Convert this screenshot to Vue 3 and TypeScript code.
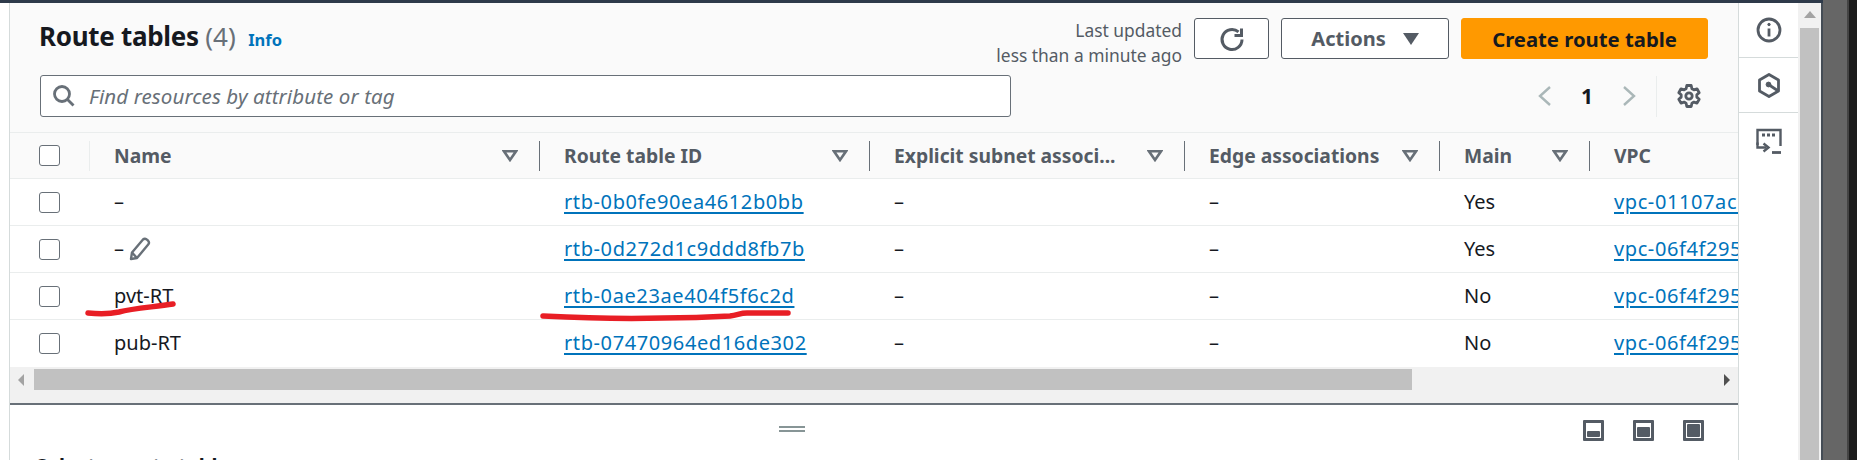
<script setup lang="ts">
interface Column {
  label: string
  width: number
  filter: boolean
}

interface Row {
  name: string
  edit?: boolean
  id: string
  main: string
  vpc: string
}

const columns: Column[] = [
  { label: 'Name', width: 450, filter: true },
  { label: 'Route table ID', width: 330, filter: true },
  { label: 'Explicit subnet associ...', width: 315, filter: true },
  { label: 'Edge associations', width: 255, filter: true },
  { label: 'Main', width: 150, filter: true },
  { label: 'VPC', width: 260, filter: false },
]

const rows: Row[] = [
  { name: '–', id: 'rtb-0b0fe90ea4612b0bb', main: 'Yes', vpc: 'vpc-01107ac…' },
  { name: '–', edit: true, id: 'rtb-0d272d1c9ddd8fb7b', main: 'Yes', vpc: 'vpc-06f4f295…' },
  { name: 'pvt-RT', id: 'rtb-0ae23ae404f5f6c2d', main: 'No', vpc: 'vpc-06f4f295…' },
  { name: 'pub-RT', id: 'rtb-07470964ed16de302', main: 'No', vpc: 'vpc-06f4f295…' },
]
</script>

<template>
  <div class="screen">
    <div class="topline"></div>
    <div class="body">
      <main class="content">
        <header class="head">
          <h1>Route tables <span class="count">(4)</span> <a class="info">Info</a></h1>
          <div class="actions">
            <p class="updated">Last updated<br />less than a minute ago</p>
            <button class="btn refresh" type="button" aria-label="Refresh">
              <svg width="26" height="26" viewBox="0 0 26 26" fill="none" stroke="#545b64" stroke-width="3">
                <path d="M23 13.500a10 10 0 1 1-3.500-7.600" />
                <path d="M22.500 2.500v7h-7" />
              </svg>
            </button>
            <button class="btn actions-btn" type="button">
              Actions
              <svg width="16" height="12" viewBox="0 0 16 12"><path d="M0 0h16L8 12z" fill="#545b64" /></svg>
            </button>
            <button class="btn primary" type="button">Create route table</button>
          </div>
        </header>

        <div class="toolbar">
          <label class="search">
            <svg width="22" height="22" viewBox="0 0 22 22" fill="none" stroke="#687078" stroke-width="2.800">
              <circle cx="9" cy="9" r="7.500" />
              <path d="M14.500 14.500l6 6" />
            </svg>
            <span>Find resources by attribute or tag</span>
          </label>
          <div class="pager">
            <svg width="13" height="20" viewBox="0 0 13 20" fill="none" stroke="#aab7b8" stroke-width="2.400"><path d="M12 1L2 10l10 9" /></svg>
            <b>1</b>
            <svg width="13" height="20" viewBox="0 0 13 20" fill="none" stroke="#aab7b8" stroke-width="2.400"><path d="M1 1l10 9-10 9" /></svg>
          </div>
          <div class="prefs">
            <svg width="24" height="24" viewBox="0 0 24 24" fill="none" stroke="#545b64" stroke-width="2.800" stroke-linejoin="round">
              <path d="M9.800 1.500h4.400l.7 3.200 2 1.100 3.100-1 2.200 3.800-2.400 2.200v2.300l2.400 2.200-2.200 3.800-3.100-1-2 1.100-.7 3.300H9.800l-.7-3.300-2-1.100-3.100 1-2.200-3.800 2.400-2.200v-2.300L1.800 8.600 4 4.800l3.100 1 2-1.100z" />
              <circle cx="12" cy="12" r="3.200" />
            </svg>
          </div>
        </div>

        <div class="table">
          <div class="row header">
            <div class="check-cell"><span class="checkbox"></span></div>
            <div v-for="col in columns" :key="col.label" class="th" :style="{ width: col.width + 'px' }">
              <span>{{ col.label }}</span>
              <svg v-if="col.filter" class="filter" width="16" height="12" viewBox="0 0 16 12" fill="none" stroke="#687078" stroke-width="2.600"><path d="M2 1.300h12L8 10z" /></svg>
            </div>
          </div>
          <div v-for="row in rows" :key="row.id" class="row">
            <div class="check-cell"><span class="checkbox"></span></div>
            <div class="td" :style="{ width: columns[0].width + 'px' }">
              {{ row.name }}
              <svg v-if="row.edit" class="pencil" width="22" height="24" viewBox="0 0 22 24" fill="none" stroke="#687078" stroke-width="2.400" stroke-linejoin="round">
                <path d="M2 22l1-6.500L14 2.500a2.800 2.800 0 0 1 4 .2l1 1a2.800 2.800 0 0 1 .2 3.800L8 21z" />
                <path d="M3 15.500L8 21" />
              </svg>
            </div>
            <div class="td" :style="{ width: columns[1].width + 'px' }"><a>{{ row.id }}</a></div>
            <div class="td" :style="{ width: columns[2].width + 'px' }">–</div>
            <div class="td" :style="{ width: columns[3].width + 'px' }">–</div>
            <div class="td" :style="{ width: columns[4].width + 'px' }">{{ row.main }}</div>
            <div class="td" :style="{ width: columns[5].width + 'px' }"><a>{{ row.vpc }}</a></div>
          </div>
          <svg class="scribble first" width="100" height="20" viewBox="0 0 100 20" fill="none" stroke="#e81e25" stroke-width="5.500" stroke-linecap="round">
            <path d="M3 15c10 1 22 1 31-1 15-4 36-5 54-8" />
          </svg>
          <svg class="scribble second" width="260" height="16" viewBox="0 0 260 16" fill="none" stroke="#e81e25" stroke-width="5.500" stroke-linecap="round">
            <path d="M3 7c40 2 80 3 120 2 25 0 50-1 67-2 8-1 10-3 17-3h41" />
          </svg>
        </div>

        <div class="hscroll">
          <i class="arrow left"></i>
          <div class="thumb"></div>
          <i class="arrow right"></i>
        </div>

        <section class="split">
          <div class="split-bar">
            <div class="handle"></div>
            <div class="split-icons">
              <span class="split-icon small"></span>
              <span class="split-icon medium"></span>
              <span class="split-icon large"></span>
            </div>
          </div>
          <h2>Select a route table</h2>
        </section>
      </main>

      <aside class="tools">
        <div class="tool">
          <svg width="26" height="26" viewBox="0 0 26 26" fill="none" stroke="#545b64" stroke-width="2.800">
            <circle cx="13" cy="13" r="11" />
            <path d="M13 11.500v8" />
            <circle cx="13" cy="7.500" r="1.200" fill="#545b64" stroke-width="1" />
          </svg>
        </div>
        <div class="tool">
          <svg width="22" height="25" viewBox="0 0 22 25" fill="none" stroke="#545b64" stroke-width="2.800" stroke-linejoin="round">
            <path d="M11 1.500l9.500 5.500v11L11 23.500 1.500 18V7z" />
            <circle cx="10.500" cy="11.500" r="2.400" fill="#545b64" stroke-width="1" />
            <path d="M10.500 11.500l9 6" />
          </svg>
        </div>
        <div class="tool">
          <svg width="26" height="26" viewBox="0 0 26 26" fill="none" stroke="#545b64" stroke-width="2.400">
            <path d="M1.500 17V2h23v16" />
            <path d="M1.500 14.500v5h9" />
            <path d="M7.500 15.500l5 4-5 4" />
            <path d="M16 24.500h9" stroke-width="2.800" />
            <path d="M6 7h3M11 7h3M16 7h3" stroke-width="3" />
          </svg>
        </div>
      </aside>

      <div class="vscroll">
        <i class="up"></i>
        <div class="vthumb"></div>
      </div>
      <div class="edge"></div>
    </div>
  </div>
</template>

<style scoped>
.screen {
  width: 1857px;
  height: 460px;
  overflow: hidden;
  background: #fff;
  font-family: "Noto Sans", "Liberation Sans", sans-serif;
  color: #16191f;
}

.topline {
  height: 3px;
  width: 1823px;
  background: #2e3a4a;
}

.body {
  display: flex;
  height: 457px;
}

.content {
  width: 1729px;
  margin-left: 9px;
  border-left: 1px solid #d5dbdb;
  overflow: hidden;
  flex: none;
  background: #fff;
  box-sizing: border-box;
}

.head {
  display: flex;
  justify-content: space-between;
  height: 72px;
  padding: 15px 30px 0 29px;
  box-sizing: border-box;
  background: #fafafa;
}

h1 {
  margin: 1px 0 0;
  font-size: 26px;
  font-weight: 700;
  line-height: 34px;
  letter-spacing: -0.3px;
}

.count {
  color: #687078;
  font-weight: 400;
  letter-spacing: 0;
}

.info {
  margin-left: 6px;
  color: #0073bb;
  font-size: 16.500px;
  font-weight: 700;
  letter-spacing: 0;
}

.actions {
  display: flex;
  gap: 12px;
}

.updated {
  margin: 0;
  font-size: 17.400px;
  line-height: 25px;
  color: #545b64;
  text-align: right;
}

.btn {
  height: 41px;
  border: 1px solid #545b64;
  border-radius: 3px;
  background: #fff;
  font: inherit;
  font-size: 20px;
  font-weight: 700;
  color: #545b64;
  padding: 0;
  display: flex;
  align-items: center;
  justify-content: center;
}

.refresh {
  width: 75px;
}

.actions-btn {
  width: 168px;
  gap: 17px;
}

.primary {
  width: 247px;
  font-size: 20.300px;
  background: #f90;
  border-color: #f90;
  color: #16191f;
}

.toolbar {
  display: flex;
  align-items: center;
  height: 57px;
  padding: 0 37px 15px 30px;
  box-sizing: border-box;
  background: #fafafa;
}

.search {
  width: 971px;
  height: 42px;
  box-sizing: border-box;
  border: 1px solid #687078;
  border-radius: 3px;
  background: #fff;
  display: flex;
  align-items: center;
  gap: 14px;
  padding-left: 12px;
  font-style: italic;
  font-size: 20.500px;
  letter-spacing: 0.1px;
  color: #687078;
}

.pager {
  margin-left: auto;
  display: flex;
  align-items: center;
  gap: 30px;
  font-size: 21px;
}

.prefs {
  height: 41px;
  margin-left: 20px;
  padding-left: 20px;
  border-left: 1px solid #eaeded;
  display: flex;
  align-items: center;
}

.table {
  position: relative;
  border-top: 1px solid #eaeded;
}

.row {
  display: flex;
  height: 47px;
  box-sizing: border-box;
  border-bottom: 1px solid #eaeded;
  align-items: center;
  font-size: 20px;
}

.row:last-of-type {
  border-bottom: 0;
}

.row.header {
  height: 46px;
  background: #fafafa;
  font-size: 19.300px;
}

.check-cell {
  width: 80px;
  height: 30px;
  flex: none;
  padding-left: 29px;
  box-sizing: border-box;
  display: flex;
  align-items: center;
}

.header .check-cell {
  border-right: 1px solid #eaeded;
}

.checkbox {
  width: 21px;
  height: 21px;
  box-sizing: border-box;
  border: 1.500px solid #687078;
  border-radius: 3px;
  background: #fff;
}

.th {
  height: 30px;
  flex: none;
  padding: 0 21px 0 24px;
  box-sizing: border-box;
  border-right: 1px solid #687078;
  display: flex;
  align-items: center;
  justify-content: space-between;
  font-weight: 700;
  color: #545b64;
  white-space: nowrap;
}

.th:last-child {
  border-right: 0;
}

.td {
  flex: none;
  padding: 0 0 2px 24px;
  box-sizing: border-box;
  white-space: nowrap;
  display: flex;
  align-items: center;
  gap: 5px;
}

.td a {
  color: #0073bb;
  letter-spacing: 0.6px;
  text-decoration: underline;
  text-decoration-thickness: 2px;
  text-underline-offset: 3px;
}

.pencil {
  flex: none;
  margin-top: 2px;
}

.scribble {
  position: absolute;
  pointer-events: none;
}

.scribble.first {
  left: 75px;
  top: 165px;
}

.scribble.second {
  left: 530px;
  top: 176px;
}

.hscroll {
  height: 36px;
  background: #f1f1f1;
  border-bottom: 2px solid #687078;
  position: relative;
}

.thumb {
  position: absolute;
  left: 24px;
  top: 2px;
  width: 1378px;
  height: 21px;
  background: #c1c1c1;
}

.arrow {
  position: absolute;
  top: 7px;
  width: 0;
  height: 0;
  border-top: 6px solid transparent;
  border-bottom: 6px solid transparent;
}

.arrow.left {
  left: 8px;
  border-right: 6px solid #a3a3a3;
}

.arrow.right {
  right: 8px;
  border-left: 6px solid #505050;
}

.split {
  padding: 0 34px 0 26px;
  position: relative;
}

.split-bar {
  height: 47px;
  position: relative;
  display: flex;
  justify-content: flex-end;
  align-items: flex-start;
  padding-top: 15px;
  box-sizing: border-box;
}

.handle {
  position: absolute;
  left: 743px;
  top: 21px;
  width: 26px;
  height: 2px;
  border-top: 2px solid #879596;
  border-bottom: 2px solid #879596;
}

.split-icons {
  display: flex;
  gap: 29px;
}

.split-icon {
  width: 21px;
  height: 21px;
  box-sizing: border-box;
  border: 3px solid #545b64;
  border-radius: 1px;
  display: flex;
  align-items: flex-end;
  padding: 1px;
}

.split-icon::after {
  content: "";
  width: 100%;
  background: #545b64;
  border-radius: 1px;
}

.split-icon.small::after {
  height: 6px;
}

.split-icon.medium::after {
  height: 10px;
}

.split-icon.large::after {
  height: 13px;
}

h2 {
  margin: 0;
  font-size: 20px;
  font-weight: 700;
  line-height: 28px;
}

.tools {
  width: 60px;
  flex: none;
  border-left: 1px solid #d5dbdb;
  box-sizing: border-box;
  background: #fff;
}

.tool {
  height: 55px;
  box-sizing: border-box;
  display: flex;
  align-items: center;
  justify-content: center;
  border-bottom: 1px solid #d5dbdb;
}

.tool:last-child {
  border-bottom: 0;
}

.vscroll {
  width: 25px;
  flex: none;
  background: #f1f1f1;
  border-right: 2px solid #444c55;
  box-sizing: border-box;
  position: relative;
}

.up {
  position: absolute;
  left: 6px;
  top: 8px;
  border-left: 6px solid transparent;
  border-right: 6px solid transparent;
  border-bottom: 7px solid #a3a3a3;
}

.vthumb {
  position: absolute;
  left: 2px;
  right: 2px;
  top: 25px;
  bottom: 0;
  background: #c1c1c1;
}

.edge {
  flex: 1;
  margin-top: -3px;
  background: linear-gradient(90deg, #666 0, #666 24px, #444 24px, #444 26px, #1c1c1c 26px);
}
</style>
